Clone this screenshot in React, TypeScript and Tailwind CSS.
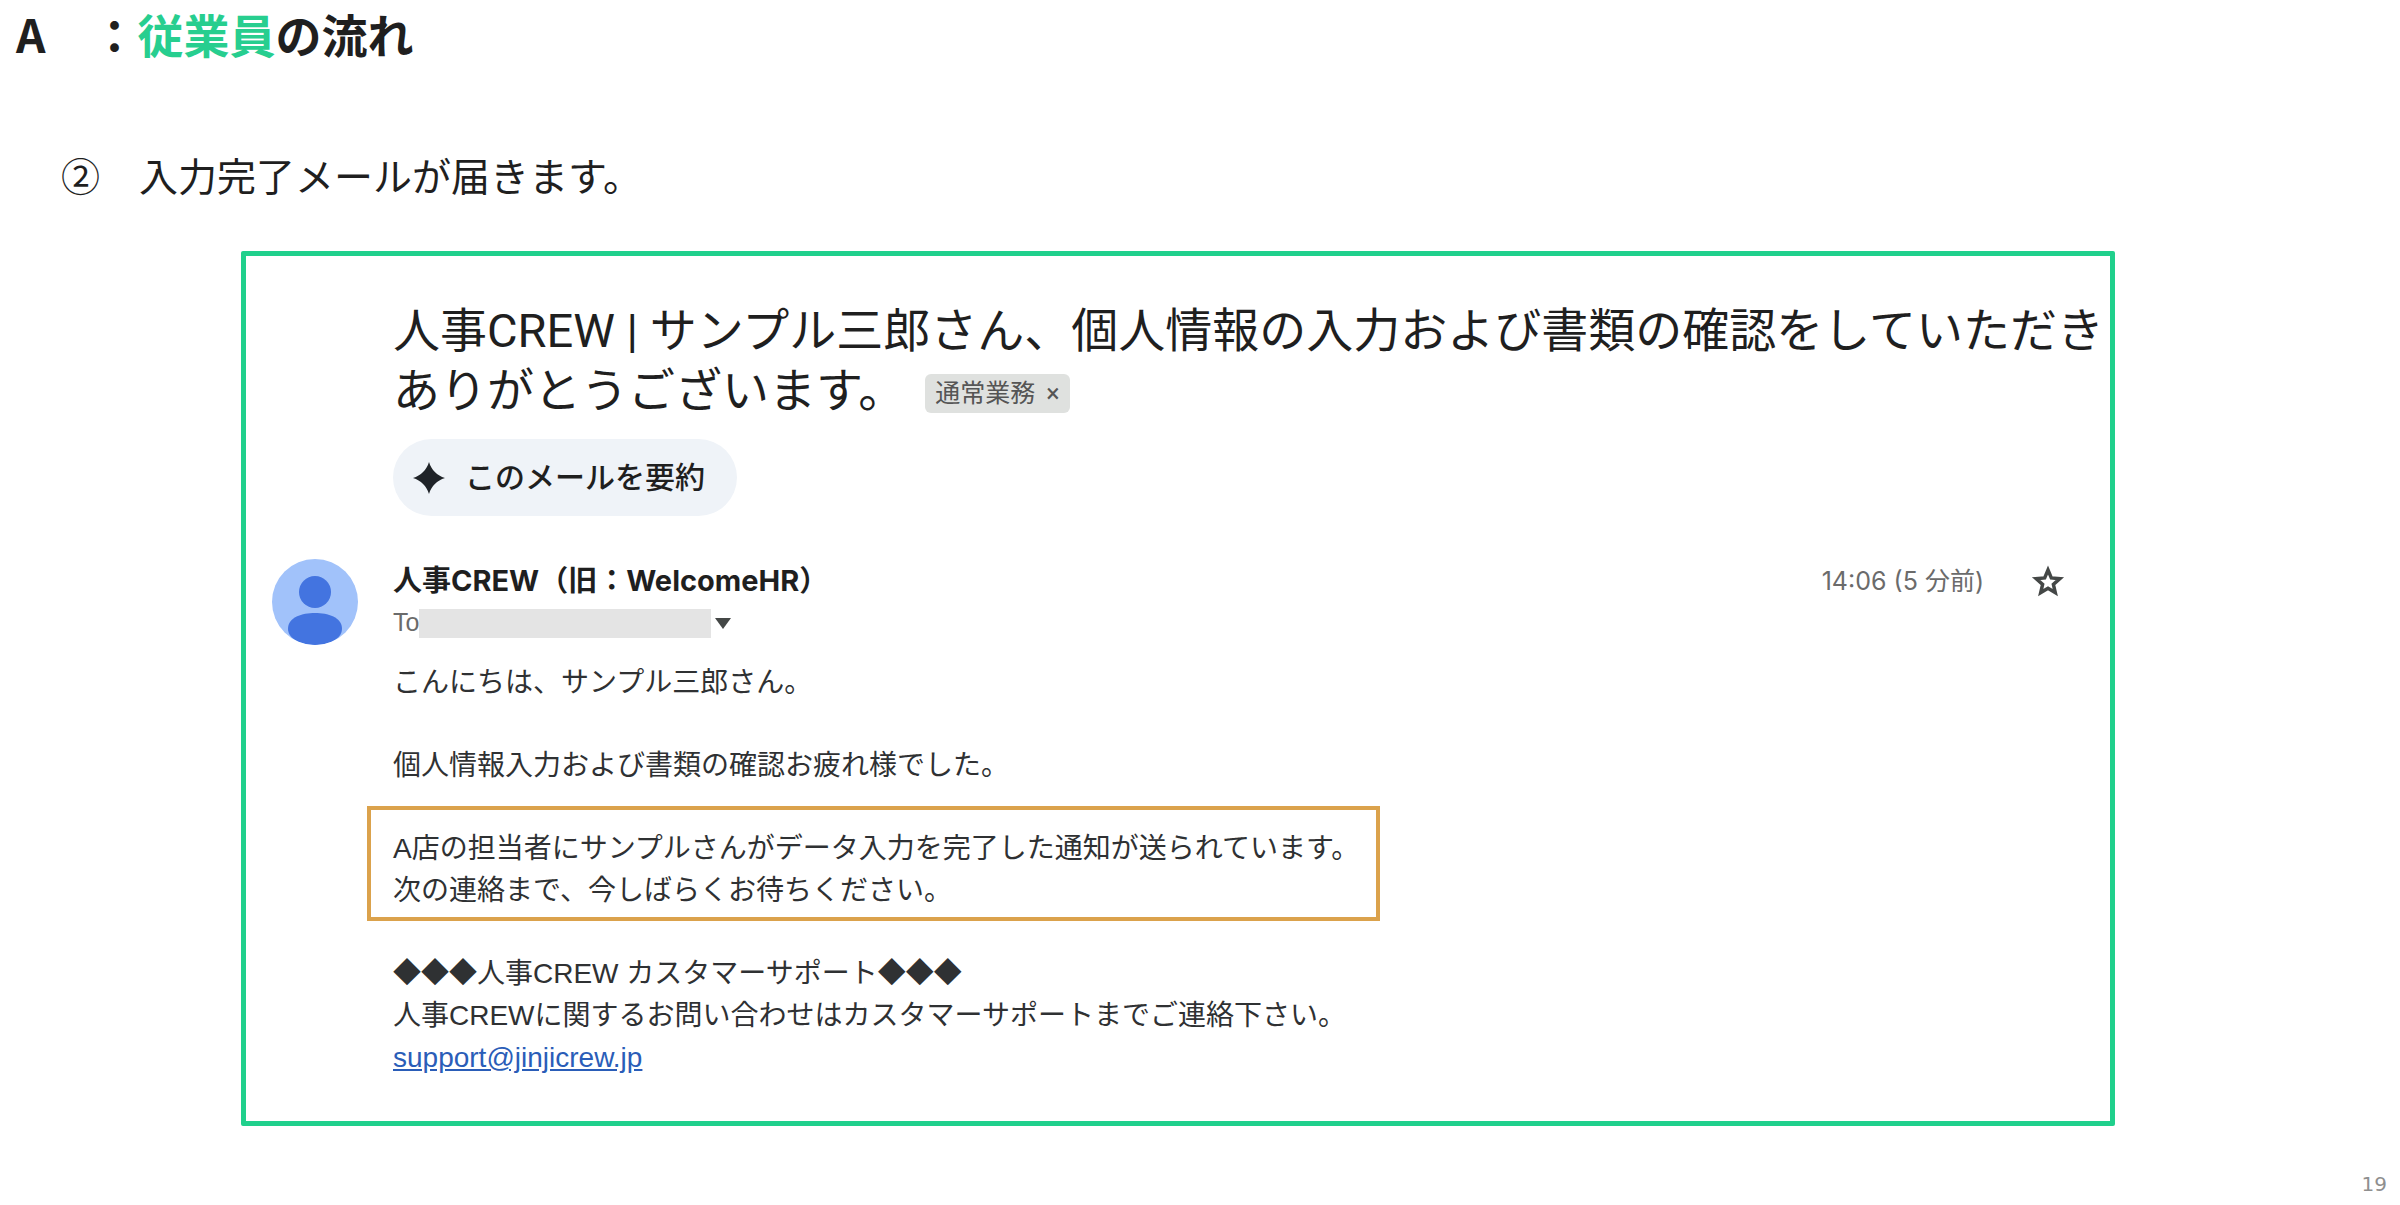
import React from 'react';

interface SenderProps {
  name: string;
  time: string;
}

const Avatar: React.FC = () => (
  <svg className="h-[86px] w-[86px] shrink-0" viewBox="0 0 86 86" aria-hidden="true">
    <defs>
      <clipPath id="avatar-clip">
        <circle cx="43" cy="43" r="43" />
      </clipPath>
    </defs>
    <g clipPath="url(#avatar-clip)">
      <rect width="86" height="86" fill="#a1c2fa" />
      <circle cx="43" cy="33" r="16" fill="#4374e0" />
      <path d="M16 70C16 58 30 54 43 54S70 58 70 70C70 80 56 86 43 86S16 80 16 70Z" fill="#4374e0" />
    </g>
  </svg>
);

const SparkIcon: React.FC = () => (
  <svg className="h-8 w-8" viewBox="0 0 32 32" fill="#1f2328" aria-hidden="true">
    <path d="M16 0C18.5 8 24 13.5 32 16C24 18.5 18.5 24 16 32C13.5 24 8 18.5 0 16C8 13.5 13.5 8 16 0Z" />
  </svg>
);

const StarIcon: React.FC = () => (
  <svg className="h-[38px] w-[38px]" viewBox="0 0 24 24" fill="none" stroke="#444746" strokeWidth="2.2" aria-hidden="true">
    <path d="M12 4.4L14.1 9.4L19.5 9.9L15.4 13.5L16.6 18.7L12 15.9L7.4 18.7L8.6 13.5L4.5 9.9L9.9 9.4Z" />
  </svg>
);

const Sender: React.FC<SenderProps> = ({ name, time }) => (
  <div className="flex items-start">
    <Avatar />
    <div className="ml-[35px] flex-1">
      <h3 className="font-['Inter','Noto_Sans_CJK_JP',sans-serif] text-[29px] leading-[44px] font-bold text-[#1f1f1f]">
        {name}
      </h3>
      <div className="flex h-10 items-center text-[25px] text-[#6b6b6b]">
        <span>To</span>
        <span className="h-[29px] w-[292px] bg-[#e4e4e4]" />
        <button type="button" aria-label="詳細を表示" className="ml-1">
          <svg className="h-[11px] w-4" viewBox="0 0 16 11" fill="#444746">
            <path d="M0 0H16L8 11Z" />
          </svg>
        </button>
      </div>
    </div>
    <div className="mr-[43px] flex h-[45px] items-center gap-[45px]">
      <time className="font-['Inter','Noto_Sans_CJK_JP',sans-serif] text-[25px] text-[#6b6b6b]">
        {time}
      </time>
      <button type="button" aria-label="スターを付ける">
        <StarIcon />
      </button>
    </div>
  </div>
);

const MailBody: React.FC = () => (
  <div className="ml-[121px] pt-[17px] text-[28px] leading-[42px] text-[#2f3133]">
    <p>こんにちは、サンプル三郎さん。</p>
    <p className="mt-[41px]">個人情報入力および書類の確認お疲れ様でした。</p>

    {/* Notice to the employee */}
    <div className="mt-[19px] -ml-[26px] w-fit border-4 border-[#dba24c] pt-[18px] pr-[17px] pb-[5px] pl-[22px]">
      <p>A店の担当者にサンプルさんがデータ入力を完了した通知が送られています。</p>
      <p>次の連絡まで、今しばらくお待ちください。</p>
    </div>

    {/* Support contact */}
    <div className="mt-8">
      <p>◆◆◆人事CREW カスタマーサポート◆◆◆</p>
      <p>人事CREWに関するお問い合わせはカスタマーサポートまでご連絡下さい。</p>
      <a href="mailto:support@jinjicrew.jp" className="block w-fit text-[#2a5db8] underline">
        support@jinjicrew.jp
      </a>
    </div>
  </div>
);

const App: React.FC = () => {
  return (
    <div className="bg-white font-['Liberation_Sans','Noto_Sans_CJK_JP',sans-serif] text-[#1f1f1f]">
      <h1 className="pl-4 font-['Noto_Sans_CJK_JP',sans-serif] text-[46px] leading-[66px] font-bold">
        A　：<span className="text-[#27ce8f]">従業員</span>の流れ
      </h1>
      <p className="mt-20 pl-[61px] font-['Noto_Sans_CJK_JP',sans-serif] text-[39px] leading-[56px]">
        ②　入力完了メールが届きます。
      </p>

      <section className="mt-[49px] mr-[285px] ml-[241px] rounded-xs border-5 border-[#20d08c] pt-[45px] pb-[42px] pl-[26px]">
        <div className="ml-[121px]">
          <h2 className="font-['Roboto','Noto_Sans_CJK_JP',sans-serif] text-[47px] leading-[60px]">
            人事CREW | サンプル三郎さん、個人情報の入力および書類の確認をしていただき
            <br />
            ありがとうございます。
            <span className="ml-5 inline-flex h-[39px] items-center gap-[11px] rounded-md bg-[#dfe1df] px-[10px] align-[5px] text-[25px] leading-[39px] text-[#555]">
              通常業務
              <button type="button" aria-label="ラベルを削除">×</button>
            </span>
          </h2>
          <button
            type="button"
            className="mt-[18px] flex h-[77px] items-center gap-5 rounded-full bg-[#eff3f8] pr-8 pl-5 text-[30px] font-medium"
          >
            <SparkIcon />
            このメールを要約
          </button>
        </div>

        <div className="mt-[43px]">
          <Sender name="人事CREW（旧：WelcomeHR）" time="14:06 (5 分前)" />
          <MailBody />
        </div>
      </section>

      <footer className="mt-[45px] flex justify-end pr-[13px]">
        <span className="font-['DejaVu_Sans',sans-serif] text-[20px] leading-[26px] text-[#8f8f8f]">
          19
        </span>
      </footer>
    </div>
  );
};

export default App;
